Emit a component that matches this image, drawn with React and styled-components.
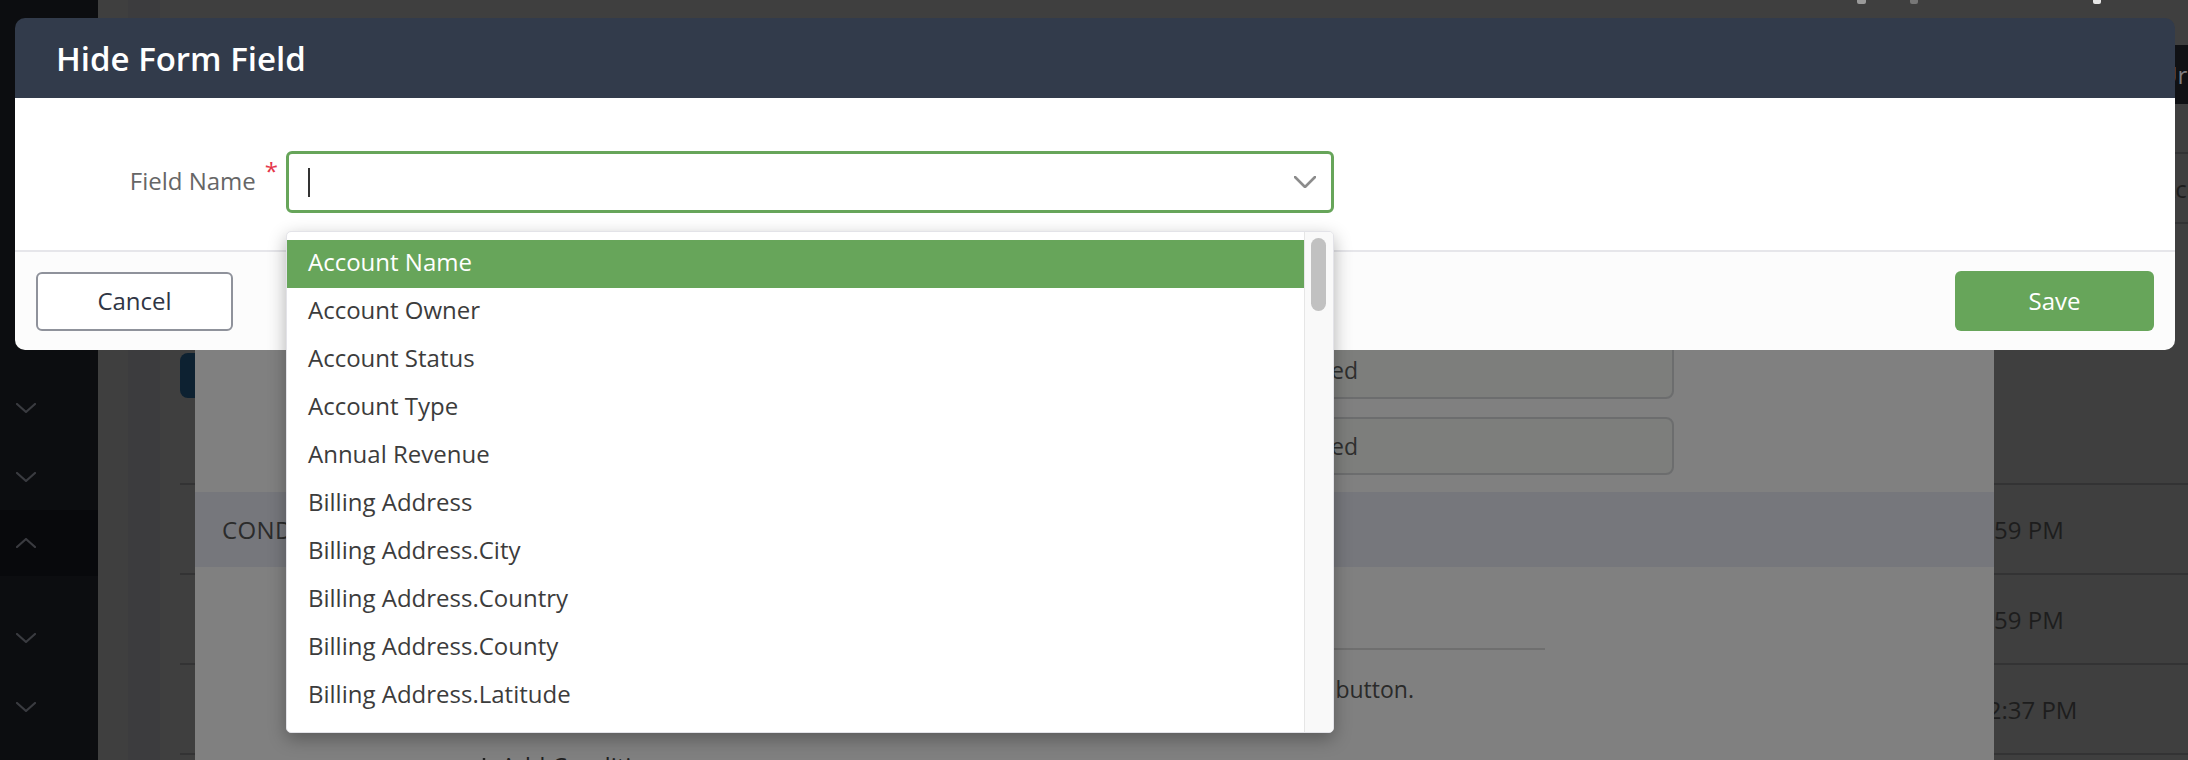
import React from 'react';
import styled, { createGlobalStyle } from 'styled-components';

const Global = createGlobalStyle`
  html, body { margin: 0; padding: 0; }
  body {
    width: 2188px; height: 760px; overflow: hidden;
    background: #3f3f3f;
    font-family: "Open Sans", "Liberation Sans", sans-serif;
  }
  * { box-sizing: border-box; }
`;

const Screen = styled.div`
  position: relative;
  width: 2188px;
  height: 760px;
  overflow: hidden;
  display: flex;
  background: #3f3f3f;
`;

/* ---------- page behind the overlay ---------- */
const Sidebar = styled.nav`
  width: 98px;
  flex: none;
  background: #0c0d10;
  display: flex;
  flex-direction: column;
`;

const NavItem = styled.div`
  height: ${p => p.$h}px;
  flex: none;
  display: flex;
  align-items: center;
  padding-left: 16px;
  background: ${p => (p.$active ? '#08090c' : 'transparent')};
`;

const Chevron = ({ up, color = '#3a3b40', w = 20, h = 10, sw = 2.2 }) => (
  <svg width={w} height={h} viewBox={`0 0 ${w} ${h}`} fill="none">
    <polyline
      points={up ? `1,${h - 1} ${w / 2},1 ${w - 1},${h - 1}` : `1,1 ${w / 2},${h - 1} ${w - 1},1`}
      stroke={color}
      strokeWidth={sw}
      strokeLinecap="round"
      strokeLinejoin="round"
    />
  </svg>
);

const PageMain = styled.div`
  flex: 1;
  display: flex;
  min-width: 0;
`;

const Rail = styled.div`
  width: ${p => p.$w}px;
  flex: none;
  background: ${p => p.$bg};
`;

const Content = styled.div`
  flex: 1;
  display: flex;
  flex-direction: column;
  padding-left: 20px;
  background: #3f3f3f;
  min-width: 0;
`;

const TopBar = styled.div`
  height: 45px;
  flex: none;
  display: flex;
  align-items: flex-start;
  justify-content: flex-end;
  padding-right: 87px;
`;

const TopIconBit = styled.span`
  width: ${p => p.$w}px;
  height: 4px;
  margin-left: ${p => p.$ml}px;
  background: ${p => p.$c};
  border-radius: 0 0 2px 2px;
`;

const TableRow = styled.div`
  height: ${p => p.$h}px;
  flex: none;
  display: grid;
  grid-template-columns: 1794px 186px 1fr;
  align-items: ${p => (p.$top ? 'start' : 'center')};
  padding-top: ${p => p.$pt || 0}px;
  background: ${p => p.$bg || 'transparent'};
  border-top: ${p => (p.$line ? '2px solid #333334' : 'none')};
  font-size: 24px;
  color: ${p => p.$color || '#1d1d1d'};
  white-space: nowrap;
`;

const Cell = styled.div`
  overflow: visible;
`;

const NavyButton = styled.div`
  width: 60px;
  height: 45px;
  border-radius: 8px;
  background: #0d2131;
`;

/* ---------- drawer (dimmed) ---------- */
const Drawer = styled.section`
  position: absolute;
  left: 195px;
  top: 30px;
  width: 1799px;
  height: 740px;
  background: #808080;
  display: flex;
  flex-direction: column;
`;

const Fields = styled.div`
  margin-top: 311px;
  align-self: flex-end;
  margin-right: 320px;
  display: flex;
  flex-direction: column;
  gap: 18px;
`;

const FakeInput = styled.div`
  width: 427px;
  height: 58px;
  background: #7d7e7c;
  border: 2px solid #6c6d6e;
  border-radius: 8px;
  display: flex;
  align-items: center;
  padding-left: 14px;
  font-size: 23px;
  color: #2e2e2e;
`;

const ValueSlot = styled.span`
  width: ${p => p.$w}px;
  text-align: right;
  white-space: nowrap;
  direction: rtl;
`;

const Band = styled.div`
  margin-top: 17px;
  height: 75px;
  flex: none;
  background: #76777c;
  display: flex;
  align-items: center;
  padding-left: 27px;
  font-size: 24px;
  letter-spacing: 0.4px;
  color: #2b2b2b;
`;

const CondBody = styled.div`
  padding-left: 275px;
  display: flex;
  flex-direction: column;
`;

const Rule = styled.div`
  margin-top: 81px;
  width: 1075px;
  height: 2px;
  background: #6f6f6f;
`;

const Hint = styled.p`
  margin: 23px 0 0;
  width: 944px;
  text-align: right;
  white-space: nowrap;
  font-size: 23px;
  line-height: 32px;
  color: #2a2a2a;
`;

const AddLink = styled.div`
  margin-top: 45px;
  padding-left: 5px;
  display: flex;
  align-items: center;
  gap: 8px;
  font-size: 24px;
  line-height: 32px;
  color: #1f1f1f;
`;

/* ---------- modal ---------- */
const Dialog = styled.div`
  position: absolute;
  left: 15px;
  top: 18px;
  width: 2160px;
  display: flex;
  flex-direction: column;
  border-radius: 10px;
  z-index: 10;
`;

const DialogHeader = styled.header`
  height: 80px;
  background: #323b4b;
  border-radius: 10px 10px 0 0;
  display: flex;
  align-items: center;
  padding-left: 41px;
`;

const Title = styled.h1`
  margin: 0;
  font-size: 33px;
  font-weight: 600;
  color: #ffffff;
`;

const DialogBody = styled.div`
  height: 152px;
  background: #ffffff;
  display: flex;
  align-items: flex-start;
  padding-top: 53px;
`;

const LabelCell = styled.label`
  width: 271px;
  height: 62px;
  flex: none;
  display: flex;
  justify-content: flex-end;
  align-items: center;
  padding-right: 8px;
  padding-bottom: 4px;
  font-size: 24px;
  color: #666666;
`;

const Req = styled.span`
  color: #e5364b;
  margin-left: 9px;
  font-size: 24px;
  align-self: flex-start;
  margin-top: 8px;
  line-height: 24px;
`;

const Field = styled.div`
  position: relative;
  width: 1048px;
`;

const SelectBox = styled.div`
  height: 62px;
  border: 3px solid #67a55a;
  border-radius: 6px;
  background: #ffffff;
  display: flex;
  align-items: center;
  padding-left: 19px;
  padding-right: 15px;
`;

const Caret = styled.span`
  width: 2px;
  height: 29px;
  background: #333333;
`;

const ChevronSlot = styled.span`
  margin-left: auto;
  display: flex;
`;

const Menu = styled.div`
  position: absolute;
  left: 0;
  top: calc(100% + 18px);
  width: 1048px;
  height: 502px;
  background: #ffffff;
  border: 1.5px solid #e3e3e8;
  border-radius: 5px;
  box-shadow: 0 6px 18px rgba(0, 0, 0, 0.3);
  display: flex;
  overflow: hidden;
  z-index: 20;
`;

const OptionList = styled.ul`
  flex: 1;
  margin: 0;
  padding: 8px 0 0;
  list-style: none;
  overflow: hidden;
`;

const Option = styled.li`
  height: 48px;
  padding-left: 21px;
  padding-bottom: 4px;
  line-height: 44px;
  font-size: 24px;
  white-space: nowrap;
  background: ${p => (p.$selected ? '#67a55a' : 'transparent')};
  color: ${p => (p.$selected ? '#ffffff' : '#3c3c3c')};
`;

const Track = styled.div`
  width: 29px;
  flex: none;
  border-left: 1.5px solid #e6e6e6;
  background: #f9f9f9;
  padding: 6px 6px 0 6px;
`;

const Thumb = styled.div`
  width: 15px;
  height: 73px;
  border-radius: 8px;
  background: #c1c1c1;
`;

const DialogFooter = styled.footer`
  height: 100px;
  background: #fcfcfc;
  border-top: 2px solid #e6e6ea;
  border-radius: 0 0 10px 10px;
  display: flex;
  align-items: center;
  justify-content: space-between;
  padding: 0 21px;
`;

const Button = styled.button`
  width: ${p => (p.$primary ? 199 : 197)}px;
  height: ${p => (p.$primary ? 60 : 59)}px;
  border-radius: 6px;
  border: ${p => (p.$primary ? 'none' : '2px solid #8f929b')};
  background: ${p => (p.$primary ? '#67a55a' : '#ffffff')};
  color: ${p => (p.$primary ? '#ffffff' : '#2f3544')};
  font-family: "Open Sans", "Liberation Sans", sans-serif;
  font-size: 24px;
  padding: 0;
  padding-bottom: 2px;
  cursor: pointer;
`;

const navItems = [
  { h: 373 },
  { h: 70, icon: 'down' },
  { h: 67, icon: 'down' },
  { h: 66, icon: 'up', active: true },
  { h: 28 },
  { h: 68, icon: 'down' },
  { h: 70, icon: 'down' },
];

const options = [
  'Account Name',
  'Account Owner',
  'Account Status',
  'Account Type',
  'Annual Revenue',
  'Billing Address',
  'Billing Address.City',
  'Billing Address.Country',
  'Billing Address.County',
  'Billing Address.Latitude',
  'Billing Address.Longitude',
  'Billing Address.State',
];

const PlusIcon = () => (
  <svg width="18" height="18" viewBox="0 0 18 18">
    <path d="M9 1v16M1 9h16" stroke="#1f1f1f" strokeWidth="2.4" />
  </svg>
);

export default function App() {
  return (
    <>
      <Global />
      <Screen>
        <Sidebar>
          {navItems.map((n, i) => (
            <NavItem key={i} $h={n.h} $active={n.active}>
              {n.icon && <Chevron up={n.icon === 'up'} />}
            </NavItem>
          ))}
        </Sidebar>

        <PageMain>
          <Rail $w={30} $bg="#3f3f3f" />
          <Rail $w={32} $bg="#3c3c3e" />
          <Content>
            <TopBar>
              <TopIconBit $w={9} $ml={0} $c="#9a9a9a" />
              <TopIconBit $w={8} $ml={44} $c="#777777" />
              <TopIconBit $w={8} $ml={175} $c="#e6e6e6" />
            </TopBar>
            <TableRow $h={59} $bg="#101114" $color="#7c7c80">
              <Cell />
              <Cell />
              <Cell>Url</Cell>
            </TableRow>
            <TableRow $h={48}>
              <Cell />
              <Cell />
              <Cell />
            </TableRow>
            <TableRow $h={70} $line>
              <Cell />
              <Cell />
              <Cell>Acc</Cell>
            </TableRow>
            <TableRow $h={261} $line $top $pt={129}>
              <Cell>
                <NavyButton />
              </Cell>
              <Cell />
              <Cell />
            </TableRow>
            <TableRow $h={90} $line>
              <Cell />
              <Cell>1:59 PM</Cell>
              <Cell />
            </TableRow>
            <TableRow $h={90} $line>
              <Cell />
              <Cell>1:59 PM</Cell>
              <Cell />
            </TableRow>
            <TableRow $h={90} $line>
              <Cell />
              <Cell>12:37 PM</Cell>
              <Cell />
            </TableRow>
            <TableRow $h={90} $line>
              <Cell />
              <Cell />
              <Cell />
            </TableRow>
          </Content>
        </PageMain>

        <Drawer>
          <Fields>
            <FakeInput>
              <ValueSlot $w={95}>Required</ValueSlot>
            </FakeInput>
            <FakeInput>
              <ValueSlot $w={95}>Required</ValueSlot>
            </FakeInput>
          </Fields>
          <Band>CONDITIONS</Band>
          <CondBody>
            <Rule />
            <Hint>No conditions have been added yet. To add one, click the Add Condition button.</Hint>
            <AddLink>
              <PlusIcon />
              Add Condition
            </AddLink>
          </CondBody>
        </Drawer>

        <Dialog role="dialog" aria-label="Hide Form Field">
          <DialogHeader>
            <Title>Hide Form Field</Title>
          </DialogHeader>
          <DialogBody>
            <LabelCell>
              Field Name
              <Req>*</Req>
            </LabelCell>
            <Field>
              <SelectBox>
                <Caret />
                <ChevronSlot>
                  <Chevron color="#8c8c8c" w={22} h={12} sw={2.6} />
                </ChevronSlot>
              </SelectBox>
              <Menu>
                <OptionList>
                  {options.map((o, i) => (
                    <Option key={o} $selected={i === 0}>
                      {o}
                    </Option>
                  ))}
                </OptionList>
                <Track>
                  <Thumb />
                </Track>
              </Menu>
            </Field>
          </DialogBody>
          <DialogFooter>
            <Button>Cancel</Button>
            <Button $primary>Save</Button>
          </DialogFooter>
        </Dialog>
      </Screen>
    </>
  );
}
